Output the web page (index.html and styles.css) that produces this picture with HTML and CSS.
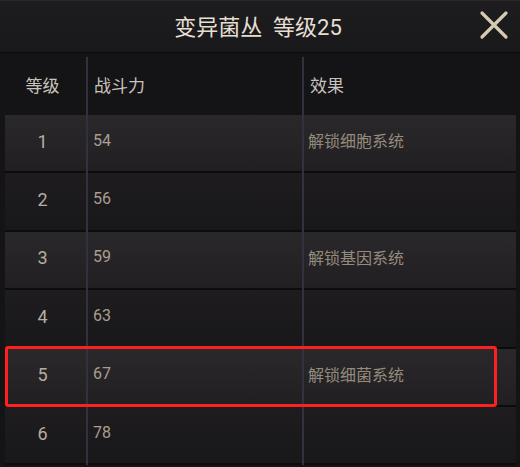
FILE: index.html
```html
<!DOCTYPE html>
<html lang="zh">
<head>
<meta charset="utf-8">
<link rel="stylesheet" href="styles.css">
</head>
<body>
<div class="panel">
  <div class="titlebar">
    <div></div>
    <div class="title">变异菌丛&nbsp; 等级25</div>
    <div class="close">
      <svg width="30" height="30" viewBox="0 0 30 30"><path d="M3 3 L27 27 M27 3 L3 27" stroke="#d6cbb2" stroke-width="3.2" stroke-linecap="round"/></svg>
    </div>
  </div>
  <div class="table">
    <div class="head">
      <div class="c1">等级</div>
      <div class="c2">战斗力</div>
      <div class="c3">效果</div>
    </div>
    <div class="row odd"><div class="c1">1</div><div class="c2">54</div><div class="c3">解锁细胞系统</div></div>
    <div class="row even"><div class="c1">2</div><div class="c2">56</div><div class="c3"></div></div>
    <div class="row odd"><div class="c1">3</div><div class="c2">59</div><div class="c3">解锁基因系统</div></div>
    <div class="row even"><div class="c1">4</div><div class="c2">63</div><div class="c3"></div></div>
    <div class="row odd marked"><div class="c1">5</div><div class="c2">67</div><div class="c3">解锁细菌系统</div><div class="highlight"></div></div>
    <div class="row even"><div class="c1">6</div><div class="c2">78</div><div class="c3"></div></div>
  </div>
</div>
</body>
</html>
```

FILE: styles.css
```css
html, body {
  margin: 0;
  padding: 0;
  background: #0e0e0f;
}
body {
  width: 520px;
  height: 467px;
  overflow: hidden;
  font-family: Roboto, "Noto Sans CJK SC", sans-serif;
}
.panel {
  height: 467px;
  background: #141316;
}
.titlebar {
  height: 52px;
  display: grid;
  grid-template-columns: 1fr auto 1fr;
  align-items: center;
  background: linear-gradient(to bottom, #1d1d1f 0%, #19191b 100%);
  border-bottom: 1px solid #0b0b0c;
  box-shadow: inset 0 1px 0 #2a2820;
}
.title {
  color: #e6dfd2;
  font-size: 22px;
  padding-bottom: 3px;
  padding-right: 4px;
}
.close {
  justify-self: end;
  margin-right: 11px;
  display: flex;
  padding-bottom: 2px;
}
.table {
  padding: 0 4px 0 5px;
}
.head, .row {
  display: grid;
  grid-template-columns: 81px 216px 1fr;
}
.head {
  height: 62px;
  background: #141316;
}
.head > div {
  display: flex;
  align-items: center;
  color: #c9c4bb;
  font-size: 17px;
  margin-top: 4px;
  padding-bottom: 4px;
}
.head .c1 {
  justify-content: center;
  padding-right: 6px;
}
.head .c2 {
  border-left: 2px solid #33313e;
  padding-left: 6px;
}
.head .c3 {
  border-left: 2px solid #33313e;
  padding-left: 6px;
}
.row {
  height: 58.4px;
  position: relative;
}
.row.odd {
  background: linear-gradient(to bottom, #2a282b 0%, #211f22 calc(100% - 2px), #0c0b0d calc(100% - 2px));
}
.row.even {
  background: linear-gradient(to bottom, #1e1c1f 0%, #18171a calc(100% - 2px), #0c0b0d calc(100% - 2px));
}
.row > div {
  display: flex;
  align-items: center;
  padding-bottom: 8px;
}
.row .c1 {
  justify-content: center;
  color: #b5ada0;
  font-size: 18px;
  padding-right: 6px;
  padding-bottom: 6px;
}
.row .c2 {
  border-left: 2px solid #33313e;
  padding-left: 5px;
  color: #a89f90;
  font-size: 16px;
}
.row .c3 {
  border-left: 2px solid #33313e;
  padding-left: 4px;
  color: #958b7c;
  font-size: 16px;
}
.row > .highlight {
  position: absolute;
  top: -3px;
  bottom: 0px;
  left: 0;
  right: 19px;
  border: 3px solid #ff1f1f;
  border-radius: 3px;
  padding: 0;
}
```
